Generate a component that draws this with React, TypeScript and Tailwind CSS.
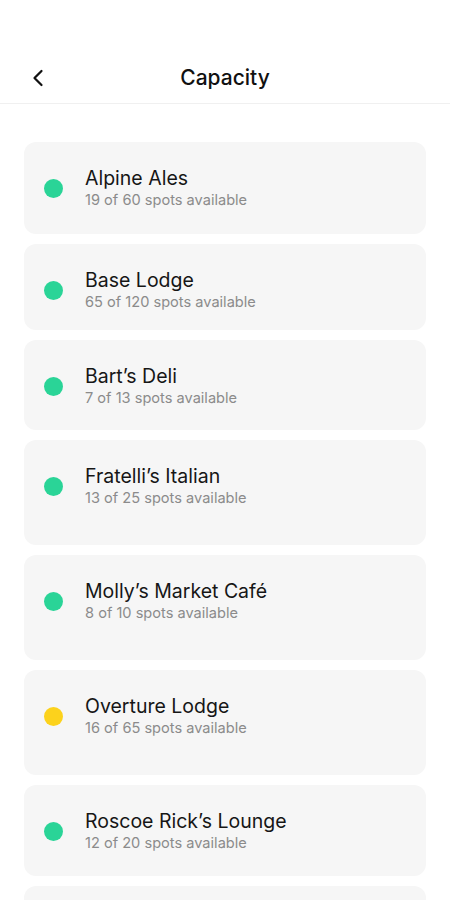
import { ChevronLeft } from "lucide-react";

type Venue = {
  name: string;
  available: number;
  total: number;
  status: "ok" | "busy";
  height: string;
};

const venues: Venue[] = [
  { name: "Alpine Ales", available: 19, total: 60, status: "ok", height: "h-[92px]" },
  { name: "Base Lodge", available: 65, total: 120, status: "ok", height: "h-[86px]" },
  { name: "Bart\u2019s Deli", available: 7, total: 13, status: "ok", height: "h-[90px]" },
  { name: "Fratelli\u2019s Italian", available: 13, total: 25, status: "ok", height: "h-[105px]" },
  { name: "Molly\u2019s Market Caf\u00e9", available: 8, total: 10, status: "ok", height: "h-[105px]" },
  { name: "Overture Lodge", available: 16, total: 65, status: "busy", height: "h-[105px]" },
  { name: "Roscoe Rick\u2019s Lounge", available: 12, total: 20, status: "ok", height: "h-[91px]" },
];

function VenueCard({ venue }: { venue: Venue }) {
  return (
    <div className={`${venue.height} shrink-0 rounded-xl bg-[#f6f6f6] px-5 pt-[24px]`}>
      <div className="flex items-center gap-[22px]">
        <span
          className={`h-[19px] w-[19px] shrink-0 rounded-full ${
            venue.status === "ok" ? "bg-[#2ad497]" : "bg-[#fcd21c]"
          }`}
        />
        <div>
          <div className="text-[19.5px] leading-6 text-[#161616]">{venue.name}</div>
          <div className="text-[14.6px] leading-5 text-[#8b8b8b]">
            {venue.available} of {venue.total} spots available
          </div>
        </div>
      </div>
    </div>
  );
}

export default function App() {
  return (
    <div className="h-[900px] overflow-hidden bg-white pt-[52px] font-['Inter',sans-serif]">
      <header className="relative flex h-[52px] items-center justify-center border-b border-[#f0f0f0]">
        <button className="absolute left-[24px] top-1/2 -translate-y-1/2 text-[#111]">
          <ChevronLeft size={28} strokeWidth={1.9} />
        </button>
        <h1 className="text-[21px] font-medium text-[#111]">Capacity</h1>
      </header>
      <main className="flex flex-col gap-[10px] px-6 pt-[38px]">
        {venues.map((v) => (
          <VenueCard key={v.name} venue={v} />
        ))}
        {/* next card peeks in under the fold */}
        <div className="h-[90px] shrink-0 rounded-xl bg-[#f6f6f6]" />
      </main>
    </div>
  );
}
